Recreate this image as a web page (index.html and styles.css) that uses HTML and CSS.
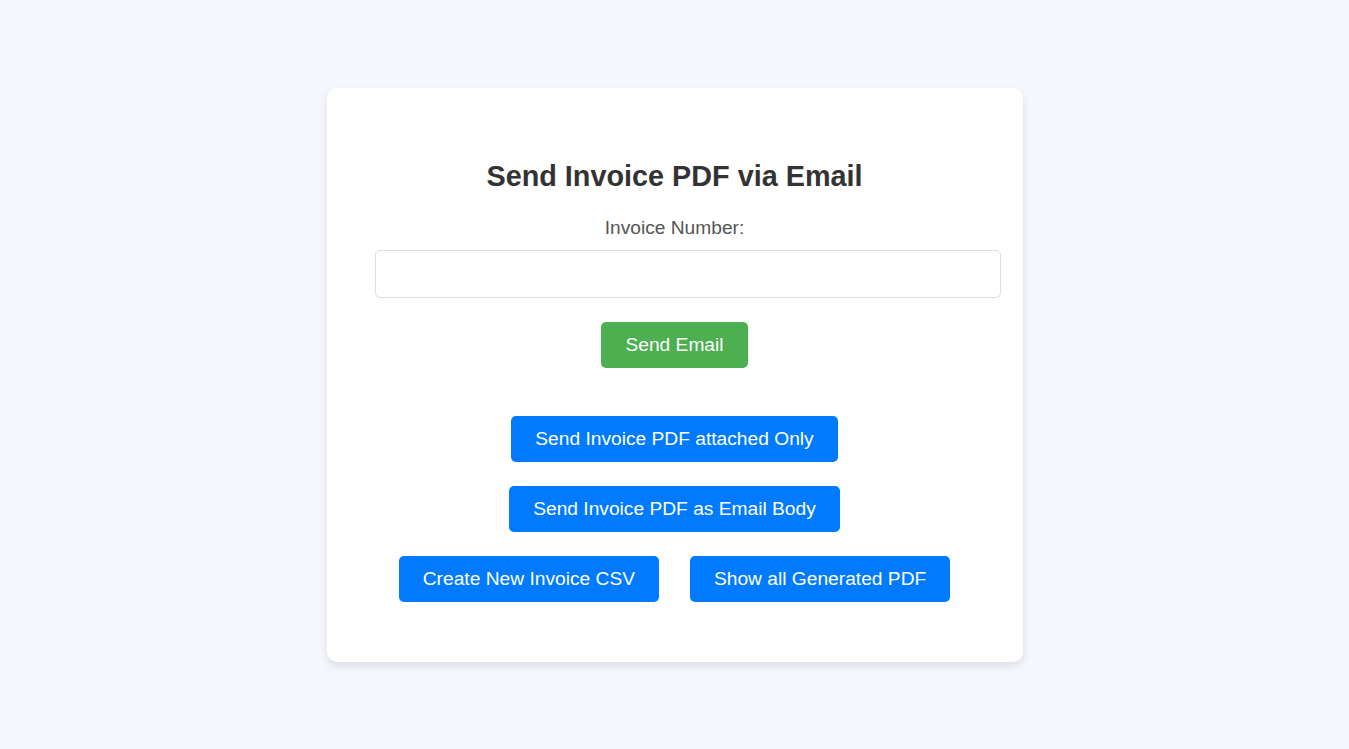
FILE: index.html
```html
<!DOCTYPE html>
<html lang="en">
<head>
<meta charset="utf-8">
<title>Send Invoice PDF via Email</title>
<link rel="stylesheet" href="styles.css">
</head>
<body>
<div class="page">
  <div class="card">
    <h2 class="title">Send Invoice PDF via Email</h2>
    <label class="label" for="inv">Invoice Number:</label>
    <input class="field" id="inv" type="text">
    <button class="btn btn-green">Send Email</button>
    <div class="actions">
      <div class="row"><button class="btn btn-blue">Send Invoice PDF attached Only</button></div>
      <div class="row"><button class="btn btn-blue">Send Invoice PDF as Email Body</button></div>
      <div class="row row-pair">
        <button class="btn btn-blue">Create New Invoice CSV</button>
        <button class="btn btn-blue">Show all Generated PDF</button>
      </div>
    </div>
  </div>
</div>
</body>
</html>
```
FILE: styles.css
```css
html, body {
  margin: 0;
  padding: 0;
}
body {
  background: #f4f7fb;
  font-family: "Liberation Sans", Arial, sans-serif;
  color: #333;
}
.page {
  display: flex;
  justify-content: center;
  padding-top: 88px;
  min-height: 749px;
  box-sizing: border-box;
}
.card {
  width: 600px;
  padding: 48px 48px 60px;
  background: #fff;
  border-radius: 10px;
  box-shadow: 0 4px 8px rgba(0, 0, 0, 0.1);
  display: flex;
  flex-direction: column;
  align-items: center;
  align-self: flex-start;
}
.title {
  font-size: 28.8px;
  font-weight: bold;
  color: #333;
  margin: 24px 0 25px;
  line-height: 32px;
}
.label {
  font-size: 19.2px;
  color: #555;
  line-height: 21px;
  margin-bottom: 12px;
}
.field {
  align-self: flex-start;
  width: 100%;
  height: 22px;
  padding: 12px;
  border: 1px solid #ddd;
  border-radius: 5px;
  font-size: 16px;
  font-family: inherit;
  background: #fff;
  margin: 0 0 24px;
}
.btn {
  font-family: inherit;
  font-size: 19.2px;
  line-height: 22px;
  padding: 12px 24px;
  border: none;
  border-radius: 5px;
  color: #fff;
  cursor: pointer;
}
.btn-green {
  background: #4caf50;
}
.btn-blue {
  background: #007bff;
}
.actions {
  margin-top: 48px;
  display: flex;
  flex-direction: column;
  align-items: center;
  gap: 24px;
}
.row {
  display: flex;
  justify-content: center;
}
.row-pair {
  gap: 31px;
}
```
